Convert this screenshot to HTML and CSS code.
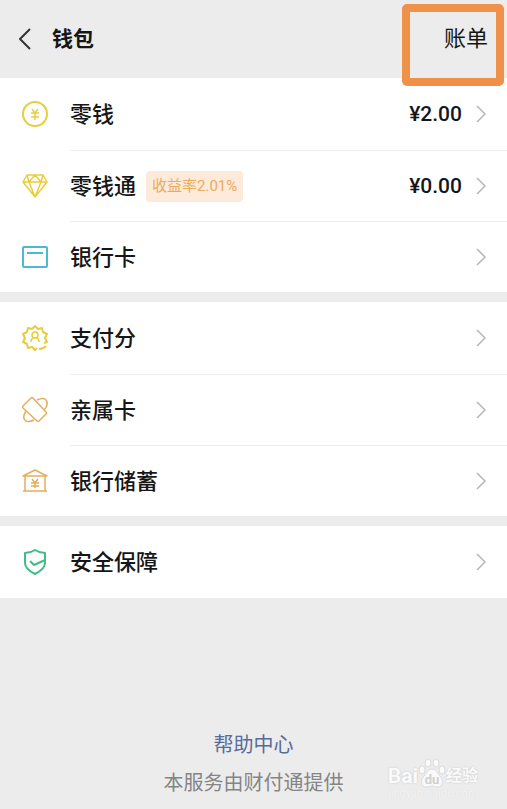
FILE: index.html
```html
<!DOCTYPE html>
<html lang="zh-CN">
  <head>
    <meta charset="UTF-8" />
    <meta name="viewport" content="width=device-width, initial-scale=1.0" />
    <title>钱包</title>
    <link rel="stylesheet" href="styles.css">
  </head>
  <body>
    <header>
      <button class="back" type="button" aria-label="返回">
        <svg width="14" height="24" viewBox="0 0 14 24"><path d="M12 2L2 12l10 10" /></svg>
      </button>
      <h1>钱包</h1>
      <a class="bill" href="#">账单</a>
    </header>

    <main>
      <section class="group">
        <a class="row" href="#">
          <svg class="icon yellow" viewBox="0 0 28 28">
            <circle cx="14" cy="14" r="12" />
            <path class="fine" d="M11 9l3 4 3-4M14 13v7M10 13h8M10 17h8" />
          </svg>
          <span class="body">
            <span class="name">零钱</span>
            <span class="amount">¥2.00</span>
            <svg class="arrow" viewBox="0 0 10 18"><path d="M1 1l8 8-8 8" /></svg>
          </span>
        </a>
        <a class="row" href="#">
          <svg class="icon yellow thin" viewBox="0 0 28 28">
            <path d="M6 3h16l4 7-12 15L2 10zM2 10h24M8 10l6 15 6-15-6-7-6 7L6 3M20 10l2-7" />
          </svg>
          <span class="body">
            <span class="name">零钱通</span>
            <span class="badge">收益率2.01%</span>
            <span class="amount">¥0.00</span>
            <svg class="arrow" viewBox="0 0 10 18"><path d="M1 1l8 8-8 8" /></svg>
          </span>
        </a>
        <a class="row" href="#">
          <svg class="icon blue" viewBox="0 0 28 28">
            <rect x="2" y="4" width="24" height="20" rx="1" />
            <path d="M6 10h16" />
          </svg>
          <span class="body">
            <span class="name">银行卡</span>
            <svg class="arrow" viewBox="0 0 10 18"><path d="M1 1l8 8-8 8" /></svg>
          </span>
        </a>
      </section>

      <section class="group">
        <a class="row" href="#">
          <svg class="icon yellow" viewBox="0 0 28 28">
            <path d="M16 24l-2 2-3-3-4 1-1-4-4-2 2-4-2-4 4-2 1-4 4 1 3-3 3 3 4-1 1 4 4 2-2 4 2 4-3 1" />
            <path d="M18 25c3 0 5-1 7-3" />
            <circle class="fine" cx="14" cy="11" r="3" />
            <path class="fine" d="M10 18c0-2 1-4 3-4M18 18c0-2-1-4-3-4" />
          </svg>
          <span class="body">
            <span class="name">支付分</span>
            <svg class="arrow" viewBox="0 0 10 18"><path d="M1 1l8 8-8 8" /></svg>
          </span>
        </a>
        <a class="row" href="#">
          <svg class="icon orange thin" viewBox="0 0 28 28">
            <path d="M2 10l8-8q1-1 2 0l13 14q1 1 0 2l-7 7q-1 1-2 0L2 12q-1-1 0-2z" />
            <path d="M16 4c4-2 8-2 9 0 2 3 1 7-2 10M13 24c-4 2-8 2-9 0-2-2-1-6 1-9" />
          </svg>
          <span class="body">
            <span class="name">亲属卡</span>
            <svg class="arrow" viewBox="0 0 10 18"><path d="M1 1l8 8-8 8" /></svg>
          </span>
        </a>
        <a class="row" href="#">
          <svg class="icon orange thin" viewBox="0 0 28 28">
            <path d="M2 9l12-6 12 6zM4 9v15M24 9v15M2 24h24" />
            <path d="M11 12l3 4 3-4M14 16v5M10 16h8M10 19h8" />
          </svg>
          <span class="body">
            <span class="name">银行储蓄</span>
            <svg class="arrow" viewBox="0 0 10 18"><path d="M1 1l8 8-8 8" /></svg>
          </span>
        </a>
      </section>

      <section class="group">
        <a class="row" href="#">
          <svg class="icon green" viewBox="0 0 28 28">
            <path d="M14 2c3 2 6 3 10 3v10c0 5-4 8-10 11C8 23 4 20 4 15V5c4 0 7-1 10-3z" />
            <path d="M9 13l4 4 11-5" />
          </svg>
          <span class="body">
            <span class="name">安全保障</span>
            <svg class="arrow" viewBox="0 0 10 18"><path d="M1 1l8 8-8 8" /></svg>
          </span>
        </a>
      </section>
    </main>

    <footer>
      <a href="#">帮助中心</a>
      <p>本服务由财付通提供</p>
      <div class="watermark">
        <div class="logo">
          <span>Bai</span>
          <svg width="28" height="30" viewBox="0 0 28 30">
            <ellipse cx="4" cy="12" rx="3" ry="4" />
            <ellipse cx="10" cy="5" rx="3" ry="4" />
            <ellipse cx="18" cy="5" rx="3" ry="4" />
            <ellipse cx="24" cy="12" rx="3" ry="4" />
            <path d="M14 11c4 0 5 4 8 7 4 4 3 11-2 11-3 0-4-1-6-1s-3 1-6 1c-5 0-6-7-2-11 3-3 4-7 8-7z" />
            <text x="14" y="26" text-anchor="middle">du</text>
          </svg>
          <span class="cn">经验</span>
        </div>
        <small>jingyan.baidu.com</small>
      </div>
    </footer>
  </body>
</html>
```
FILE: styles.css
```css
*{
    margin: 0;
    padding: 0;
    box-sizing: border-box;
}
body{
    display: flex;
    flex-direction: column;
    min-height: 100vh;
    background-color: #ececec;
    color: #161616;
    font-family: Roboto, "Noto Sans CJK SC", sans-serif;
}
a{
    color: inherit;
    text-decoration: none;
}
svg{
    flex: none;
    fill: none;
    stroke: currentColor;
    stroke-width: 2;
    stroke-linejoin: round;
}
header{
    display: flex;
    align-items: center;
    height: 78px;
    padding: 0 3px 0 18px;
}
.back{
    display: flex;
    border: none;
    background: none;
    color: #333;
    cursor: pointer;
}
h1{
    margin-left: 20px;
    font-size: 21px;
    line-height: 32px;
    font-weight: 700;
}
.bill{
    position: relative;
    margin-left: auto;
    padding-right: 16px;
    font-size: 22px;
    line-height: 32px;
}
/* highlight frame round the bill link */
.bill::after{
    content: "";
    position: absolute;
    top: -19px;
    right: 0;
    box-sizing: border-box;
    width: 102px;
    height: 82px;
    border: 8px solid #f0914a;
    border-radius: 5px;
}
main{
    display: flex;
    flex-direction: column;
    gap: 10px;
}
.group{
    background-color: white;
}
.row{
    display: flex;
    align-items: center;
    padding-left: 21px;
}
.icon{
    width: 28px;
    height: 28px;
}
.thin,
.fine{
    stroke-width: 1.5;
}
.yellow{
    color: #e8cd3c;
}
.blue{
    color: #4db8d0;
}
.orange{
    color: #e8ad5c;
}
.green{
    color: #3fbd85;
}
.body{
    display: flex;
    flex: 1;
    align-items: center;
    min-height: 72px;
    margin-left: 21px;
    padding-right: 21px;
}
.row + .row .body{
    border-top: 1px solid #ededed;
    min-height: 71px;
}
.name{
    padding-top: 1px;
    font-size: 22px;
    font-weight: 500;
    line-height: 32px;
}
.badge{
    margin-left: 10px;
    padding: 0 6px;
    border-radius: 4px;
    background-color: #fdeada;
    color: #e8ac5c;
    font-size: 15px;
    line-height: 31px;
}
.amount{
    margin-left: auto;
    font-size: 21px;
    font-weight: 500;
    line-height: 32px;
}
.arrow{
    width: 10px;
    height: 18px;
    margin-left: auto;
    color: #b4b4b4;
    stroke-width: 1.5;
}
.amount + .arrow{
    margin-left: 14px;
}
footer{
    position: relative;
    margin-top: auto;
    padding: 24px 0 7px;
    text-align: center;
    font-size: 20px;
    line-height: 38px;
}
footer a{
    color: #576b9c;
}
footer p{
    color: #858585;
}
.watermark{
    position: absolute;
    right: 29px;
    bottom: 9px;
    color: #fafafa;
}
.logo{
    display: flex;
    align-items: flex-end;
    font-size: 21px;
    font-weight: 700;
    line-height: 24px;
    text-shadow: 0 0 2px #c4c4c4;
}
.logo svg{
    fill: #fafafa;
    stroke: #dcdcdc;
    stroke-width: 1;
}
.logo text{
    fill: #d0d0d0;
    stroke: none;
    font-size: 13px;
    text-shadow: none;
}
.cn{
    font-size: 16px;
}
.watermark small{
    display: block;
    color: #f4f4f4;
    font-size: 11px;
    line-height: 12px;
    text-shadow: 0 0 1px #d8d8d8;
}
```
